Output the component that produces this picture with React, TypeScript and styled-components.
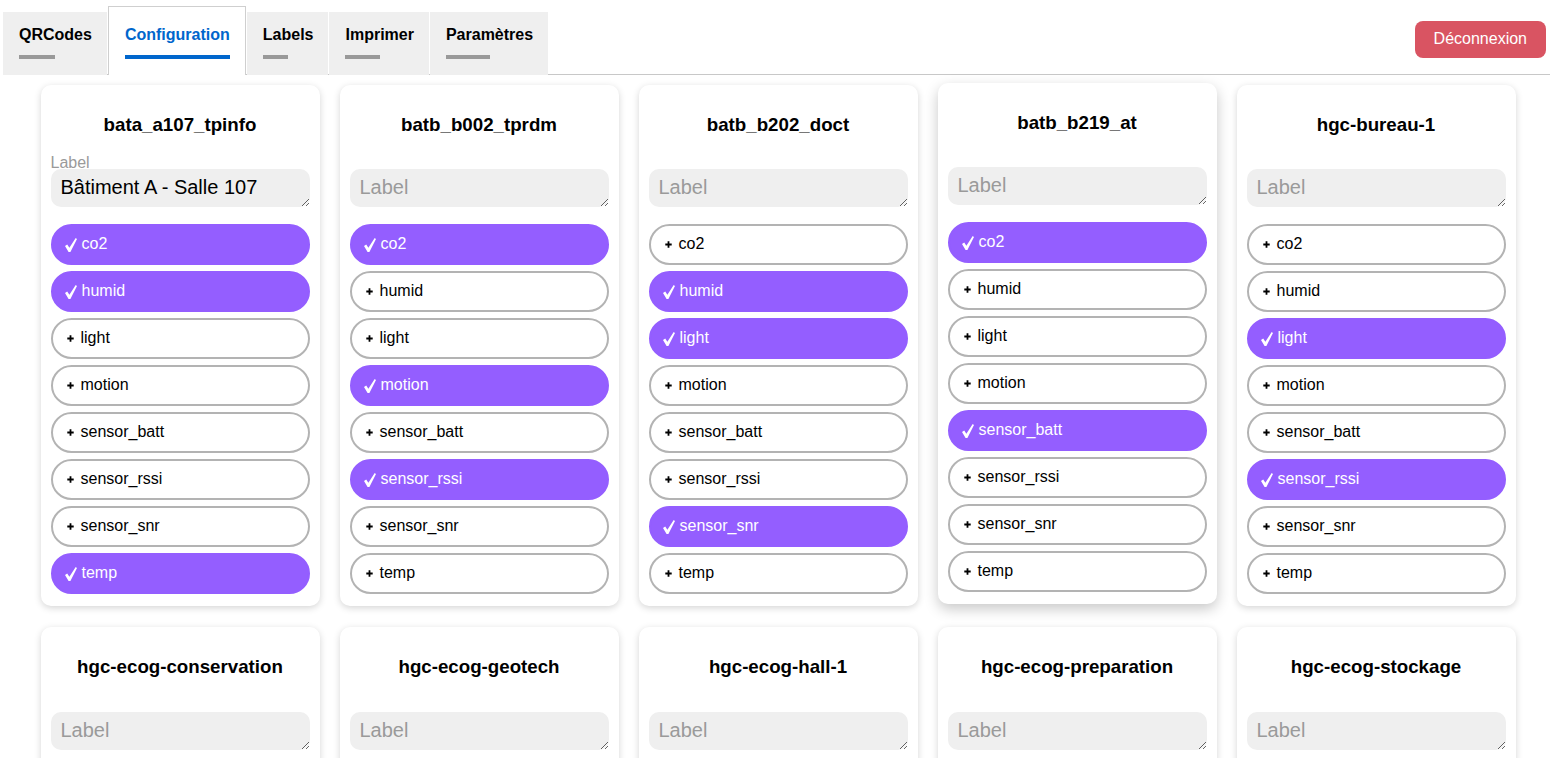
import React from "react";
import styled, { createGlobalStyle } from "styled-components";

const GlobalStyle = createGlobalStyle`
  html, body {
    margin: 0;
    padding: 0;
    background: #ffffff;
    font-family: "Liberation Sans", Arial, sans-serif;
    color: #000;
  }
  * { box-sizing: border-box; }
`;

const Header = styled.header`
  display: flex;
  align-items: flex-end;
  margin: 0 5px 0 3px;
  padding-top: 6px;
  border-bottom: 1px solid #c8c8c8;
  height: 75px;
`;

const TabList = styled.nav`
  display: flex;
  align-items: flex-end;
  gap: 1px;
`;

const Tab = styled.button<{ $active?: boolean }>`
  display: flex;
  flex-direction: column;
  align-items: flex-start;
  font-family: "Liberation Sans", Arial, sans-serif;
  font-size: 16px;
  font-weight: 700;
  line-height: 18px;
  cursor: pointer;
  background: ${(p) => (p.$active ? "#ffffff" : "#efefef")};
  color: ${(p) => (p.$active ? "#0066cc" : "#000")};
  border: ${(p) => (p.$active ? "1px solid #cfcfcf" : "none")};
  border-bottom: none;
  padding: ${(p) => (p.$active ? "19px 15px 16px 16px" : "14px 15px 16px 16px")};
  margin-bottom: -1px;
`;

const TabText = styled.span`
  display: inline-flex;
  flex-direction: column;
`;

const TabBar = styled.span<{ $active?: boolean }>`
  display: block;
  height: 4px;
  margin-top: 11px;
  width: ${(p) => (p.$active ? "100%" : "50%")};
  background: ${(p) => (p.$active ? "#0066cc" : "#999999")};
`;

const Logout = styled.button`
  margin-left: auto;
  margin-right: 4px;
  align-self: center;
  height: 37px;
  margin-top: -2px;
  padding: 0 19px;
  border: none;
  border-radius: 8px;
  background: #d95462;
  color: #fff;
  font-family: "Liberation Sans", Arial, sans-serif;
  font-size: 16px;
  cursor: pointer;
`;

const Grid = styled.main`
  display: flex;
  flex-wrap: wrap;
  justify-content: center;
  column-gap: 20px;
  row-gap: 21px;
  padding: 10px 0 20px 1px;
`;

const Card = styled.section<{ $hover?: boolean }>`
  width: 279px;
  padding: 10px 10px 10px;
  background: #fff;
  border-radius: 10px;
  box-shadow: ${(p) =>
    p.$hover
      ? "0 5px 14px rgba(0,0,0,0.22)"
      : "0 2px 7px rgba(0,0,0,0.17)"};
  transform: ${(p) => (p.$hover ? "translateY(-2px)" : "none")};
`;

const Title = styled.h3`
  margin: 18.72px 0;
  font-size: 18.72px;
  font-weight: 700;
  line-height: 21px;
  text-align: center;
`;

const Field = styled.div`
  position: relative;
  padding-top: 16px;
`;

const FloatLabel = styled.label`
  position: absolute;
  top: 2px;
  left: 0;
  font-size: 16px;
  line-height: 16px;
  color: #9a9a9a;
`;

const LabelInput = styled.textarea`
  display: block;
  width: 100%;
  height: 38px;
  padding: 7px 10px 5px;
  border: none;
  border-radius: 10px;
  background: #efefef;
  font-family: "Liberation Sans", Arial, sans-serif;
  font-size: 20px;
  line-height: 23px;
  color: #000;
  resize: vertical;
  outline: none;
  &::placeholder {
    color: #9a9a9a;
  }
`;

const PillList = styled.div`
  display: flex;
  flex-direction: column;
  gap: 6px;
  margin-top: 17px;
  margin-bottom: 2px;
`;

const Pill = styled.button<{ $on?: boolean }>`
  display: flex;
  align-items: center;
  width: 100%;
  height: 41px;
  padding: 0 12px 1px;
  border-radius: 21px;
  border: 2px solid ${(p) => (p.$on ? "#945eff" : "#b3b3b3")};
  background: ${(p) => (p.$on ? "#945eff" : "#ffffff")};
  color: ${(p) => (p.$on ? "#ffffff" : "#000000")};
  font-family: "Liberation Sans", Arial, sans-serif;
  font-size: 16px;
  text-align: left;
  cursor: pointer;
`;

const PillIcon = styled.span<{ $on?: boolean }>`
  display: inline-flex;
  align-items: center;
  justify-content: center;
  width: ${(p) => (p.$on ? "13px" : "11px")};
  margin-right: ${(p) => (p.$on ? "4px" : "5px")};
  margin-top: ${(p) => (p.$on ? "1px" : "0")};
`;

const CheckIcon = () => (
  <svg width="12" height="14" viewBox="0 0 12 14" aria-hidden>
    <path
      d="M0 7.9 L2.2 6.4 L4.4 9.7 L10.7 0 L12 0.9 L5.4 14 L3.6 14 Z"
      fill="currentColor"
    />
  </svg>
);

const PlusIcon = () => (
  <svg width="7" height="7" viewBox="0 0 7 7" aria-hidden>
    <path d="M3.5 0.3 V6.7 M0.3 3.5 H6.7" stroke="currentColor" strokeWidth="1.8" />
  </svg>
);

const SENSORS = [
  "co2",
  "humid",
  "light",
  "motion",
  "sensor_batt",
  "sensor_rssi",
  "sensor_snr",
  "temp",
];

type Device = { name: string; label?: string; on: string[]; hover?: boolean };

const DEVICES: Device[] = [
  { name: "bata_a107_tpinfo", label: "Bâtiment A - Salle 107", on: ["co2", "humid", "temp"] },
  { name: "batb_b002_tprdm", on: ["co2", "motion", "sensor_rssi"] },
  { name: "batb_b202_doct", on: ["humid", "light", "sensor_snr"] },
  { name: "batb_b219_at", on: ["co2", "sensor_batt"], hover: true },
  { name: "hgc-bureau-1", on: ["light", "sensor_rssi"] },
  { name: "hgc-ecog-conservation", on: [] },
  { name: "hgc-ecog-geotech", on: [] },
  { name: "hgc-ecog-hall-1", on: [] },
  { name: "hgc-ecog-preparation", on: [] },
  { name: "hgc-ecog-stockage", on: [] },
];

const TABS = ["QRCodes", "Configuration", "Labels", "Imprimer", "Paramètres"];

export default function App() {
  return (
    <>
      <GlobalStyle />
      <Header>
        <TabList>
          {TABS.map((t) => (
            <Tab key={t} $active={t === "Configuration"}>
              <TabText>
                {t}
                <TabBar $active={t === "Configuration"} />
              </TabText>
            </Tab>
          ))}
        </TabList>
        <Logout>Déconnexion</Logout>
      </Header>
      <Grid>
        {DEVICES.map((d) => (
          <Card key={d.name} $hover={d.hover}>
            <Title>{d.name}</Title>
            <Field>
              {d.label && <FloatLabel>Label</FloatLabel>}
              <LabelInput
                rows={1}
                placeholder={d.label ? "" : "Label"}
                defaultValue={d.label ?? ""}
              />
            </Field>
            <PillList>
              {SENSORS.map((s) => {
                const on = d.on.includes(s);
                return (
                  <Pill key={s} $on={on}>
                    <PillIcon $on={on}>{on ? <CheckIcon /> : <PlusIcon />}</PillIcon>
                    {s}
                  </Pill>
                );
              })}
            </PillList>
          </Card>
        ))}
      </Grid>
    </>
  );
}
